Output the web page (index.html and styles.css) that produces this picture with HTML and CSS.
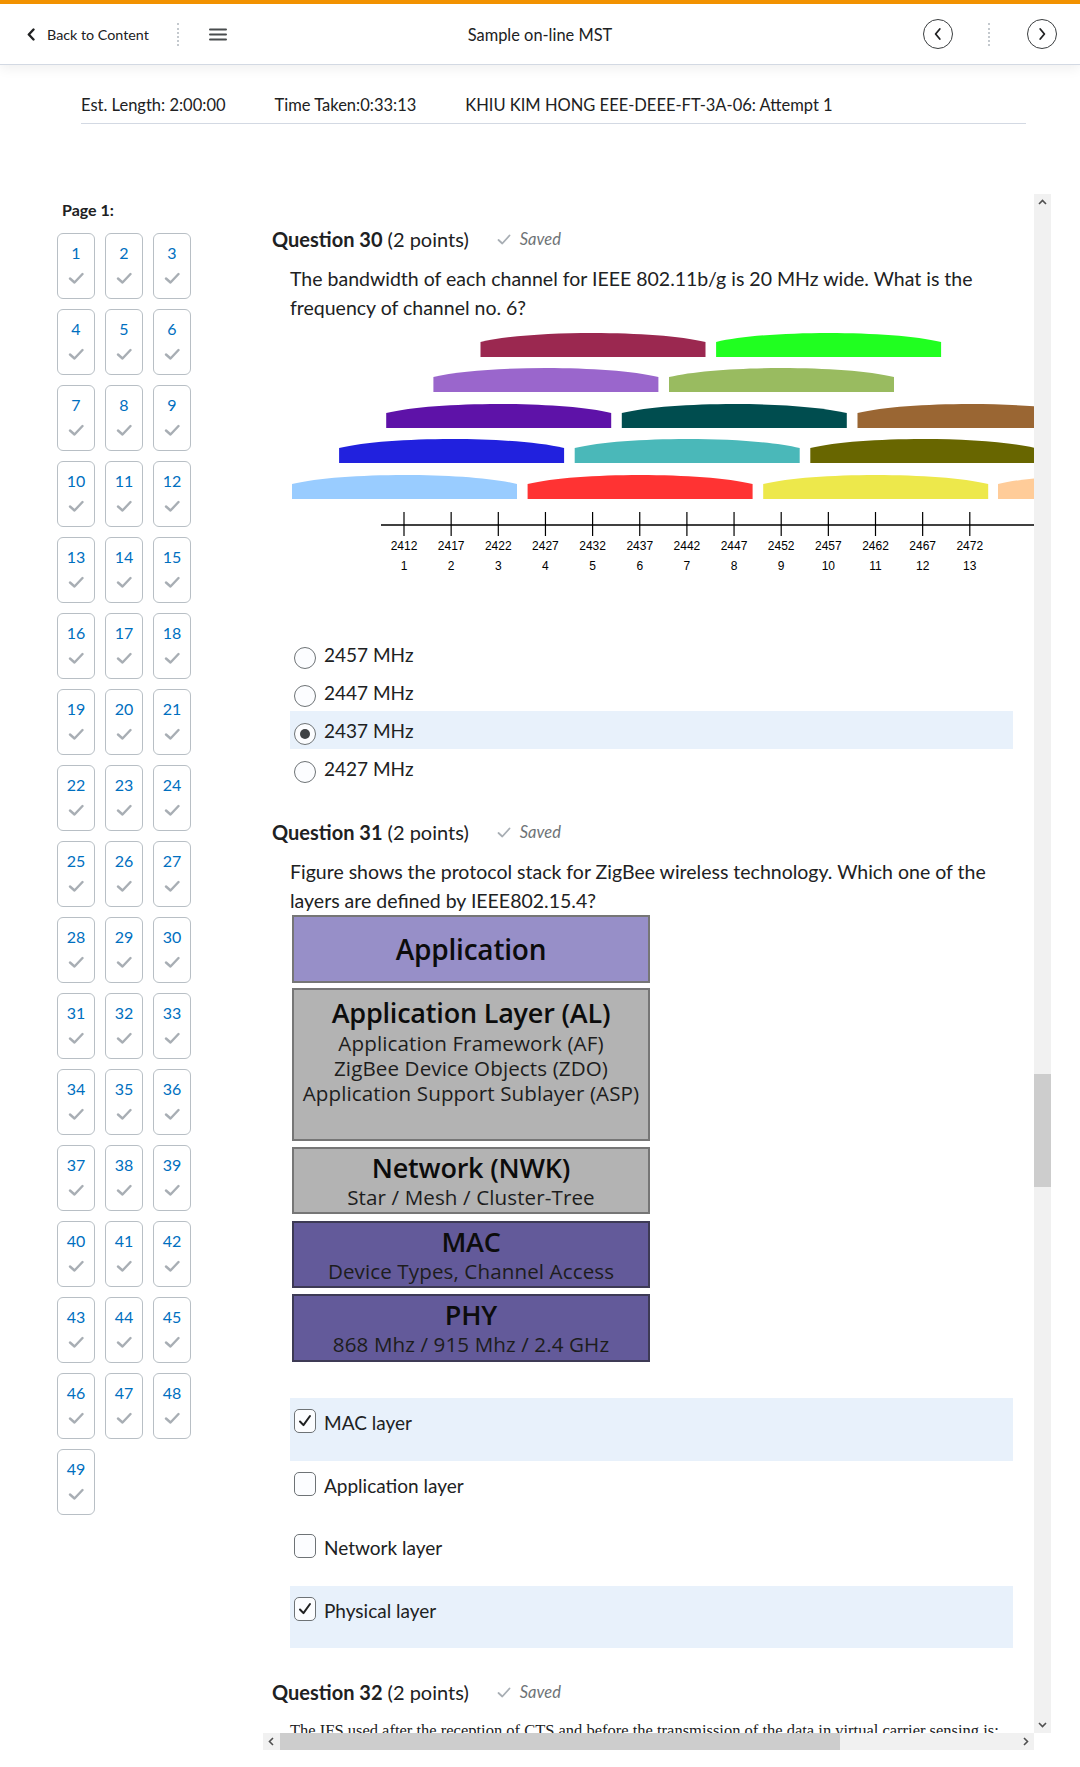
FILE: index.html
```html
<!DOCTYPE html>
<html lang="en">
<head>
<meta charset="utf-8">
<title>Sample on-line MST</title>
<link rel="stylesheet" href="styles.css">
</head>
<body>
<header class="topbar">
  <div class="nav-left">
    <a class="back">
      <svg class="back-chev" width="8" height="13" viewBox="0 0 8 13"><path d="M6.5 1.5L1.8 6.5l4.7 5" fill="none" stroke="#202122" stroke-width="2.4" stroke-linecap="round" stroke-linejoin="round"/></svg>
      <span>Back to Content</span>
    </a>
    <span class="vdots"></span>
    <svg class="burger" width="18" height="13" viewBox="0 0 18 13"><path d="M1 1.5h16M1 6.5h16M1 11.5h16" stroke="#494c4e" stroke-width="2" stroke-linecap="round"/></svg>
  </div>
  <div class="title">Sample on-line MST</div>
  <div class="nav-right">
    <span class="circ"><svg width="10" height="14" viewBox="0 0 10 14"><path d="M6.8 2L2.6 7l4.2 5" fill="none" stroke="#202122" stroke-width="1.8" stroke-linecap="round" stroke-linejoin="round"/></svg></span>
    <span class="vdots"></span>
    <span class="circ"><svg width="10" height="14" viewBox="0 0 10 14"><path d="M3.2 2l4.2 5-4.2 5" fill="none" stroke="#202122" stroke-width="1.8" stroke-linecap="round" stroke-linejoin="round"/></svg></span>
  </div>
</header>

<div class="info">
  <span>Est. Length: 2:00:00</span>
  <span>Time Taken:0:33:13</span>
  <span>KHIU KIM HONG EEE-DEEE-FT-3A-06: Attempt 1</span>
</div>

<div class="layout">
  <aside class="sidebar">
    <div class="page-label">Page 1:</div>
    <div class="qgrid">
      <a class="qbox"><span>1</span><svg class="ck" viewBox="0 0 16 12"><path d="M2 6.5l4.5 4L14.5 2"/></svg></a>
      <a class="qbox"><span>2</span><svg class="ck" viewBox="0 0 16 12"><path d="M2 6.5l4.5 4L14.5 2"/></svg></a>
      <a class="qbox"><span>3</span><svg class="ck" viewBox="0 0 16 12"><path d="M2 6.5l4.5 4L14.5 2"/></svg></a>
      <a class="qbox"><span>4</span><svg class="ck" viewBox="0 0 16 12"><path d="M2 6.5l4.5 4L14.5 2"/></svg></a>
      <a class="qbox"><span>5</span><svg class="ck" viewBox="0 0 16 12"><path d="M2 6.5l4.5 4L14.5 2"/></svg></a>
      <a class="qbox"><span>6</span><svg class="ck" viewBox="0 0 16 12"><path d="M2 6.5l4.5 4L14.5 2"/></svg></a>
      <a class="qbox"><span>7</span><svg class="ck" viewBox="0 0 16 12"><path d="M2 6.5l4.5 4L14.5 2"/></svg></a>
      <a class="qbox"><span>8</span><svg class="ck" viewBox="0 0 16 12"><path d="M2 6.5l4.5 4L14.5 2"/></svg></a>
      <a class="qbox"><span>9</span><svg class="ck" viewBox="0 0 16 12"><path d="M2 6.5l4.5 4L14.5 2"/></svg></a>
      <a class="qbox"><span>10</span><svg class="ck" viewBox="0 0 16 12"><path d="M2 6.5l4.5 4L14.5 2"/></svg></a>
      <a class="qbox"><span>11</span><svg class="ck" viewBox="0 0 16 12"><path d="M2 6.5l4.5 4L14.5 2"/></svg></a>
      <a class="qbox"><span>12</span><svg class="ck" viewBox="0 0 16 12"><path d="M2 6.5l4.5 4L14.5 2"/></svg></a>
      <a class="qbox"><span>13</span><svg class="ck" viewBox="0 0 16 12"><path d="M2 6.5l4.5 4L14.5 2"/></svg></a>
      <a class="qbox"><span>14</span><svg class="ck" viewBox="0 0 16 12"><path d="M2 6.5l4.5 4L14.5 2"/></svg></a>
      <a class="qbox"><span>15</span><svg class="ck" viewBox="0 0 16 12"><path d="M2 6.5l4.5 4L14.5 2"/></svg></a>
      <a class="qbox"><span>16</span><svg class="ck" viewBox="0 0 16 12"><path d="M2 6.5l4.5 4L14.5 2"/></svg></a>
      <a class="qbox"><span>17</span><svg class="ck" viewBox="0 0 16 12"><path d="M2 6.5l4.5 4L14.5 2"/></svg></a>
      <a class="qbox"><span>18</span><svg class="ck" viewBox="0 0 16 12"><path d="M2 6.5l4.5 4L14.5 2"/></svg></a>
      <a class="qbox"><span>19</span><svg class="ck" viewBox="0 0 16 12"><path d="M2 6.5l4.5 4L14.5 2"/></svg></a>
      <a class="qbox"><span>20</span><svg class="ck" viewBox="0 0 16 12"><path d="M2 6.5l4.5 4L14.5 2"/></svg></a>
      <a class="qbox"><span>21</span><svg class="ck" viewBox="0 0 16 12"><path d="M2 6.5l4.5 4L14.5 2"/></svg></a>
      <a class="qbox"><span>22</span><svg class="ck" viewBox="0 0 16 12"><path d="M2 6.5l4.5 4L14.5 2"/></svg></a>
      <a class="qbox"><span>23</span><svg class="ck" viewBox="0 0 16 12"><path d="M2 6.5l4.5 4L14.5 2"/></svg></a>
      <a class="qbox"><span>24</span><svg class="ck" viewBox="0 0 16 12"><path d="M2 6.5l4.5 4L14.5 2"/></svg></a>
      <a class="qbox"><span>25</span><svg class="ck" viewBox="0 0 16 12"><path d="M2 6.5l4.5 4L14.5 2"/></svg></a>
      <a class="qbox"><span>26</span><svg class="ck" viewBox="0 0 16 12"><path d="M2 6.5l4.5 4L14.5 2"/></svg></a>
      <a class="qbox"><span>27</span><svg class="ck" viewBox="0 0 16 12"><path d="M2 6.5l4.5 4L14.5 2"/></svg></a>
      <a class="qbox"><span>28</span><svg class="ck" viewBox="0 0 16 12"><path d="M2 6.5l4.5 4L14.5 2"/></svg></a>
      <a class="qbox"><span>29</span><svg class="ck" viewBox="0 0 16 12"><path d="M2 6.5l4.5 4L14.5 2"/></svg></a>
      <a class="qbox"><span>30</span><svg class="ck" viewBox="0 0 16 12"><path d="M2 6.5l4.5 4L14.5 2"/></svg></a>
      <a class="qbox"><span>31</span><svg class="ck" viewBox="0 0 16 12"><path d="M2 6.5l4.5 4L14.5 2"/></svg></a>
      <a class="qbox"><span>32</span><svg class="ck" viewBox="0 0 16 12"><path d="M2 6.5l4.5 4L14.5 2"/></svg></a>
      <a class="qbox"><span>33</span><svg class="ck" viewBox="0 0 16 12"><path d="M2 6.5l4.5 4L14.5 2"/></svg></a>
      <a class="qbox"><span>34</span><svg class="ck" viewBox="0 0 16 12"><path d="M2 6.5l4.5 4L14.5 2"/></svg></a>
      <a class="qbox"><span>35</span><svg class="ck" viewBox="0 0 16 12"><path d="M2 6.5l4.5 4L14.5 2"/></svg></a>
      <a class="qbox"><span>36</span><svg class="ck" viewBox="0 0 16 12"><path d="M2 6.5l4.5 4L14.5 2"/></svg></a>
      <a class="qbox"><span>37</span><svg class="ck" viewBox="0 0 16 12"><path d="M2 6.5l4.5 4L14.5 2"/></svg></a>
      <a class="qbox"><span>38</span><svg class="ck" viewBox="0 0 16 12"><path d="M2 6.5l4.5 4L14.5 2"/></svg></a>
      <a class="qbox"><span>39</span><svg class="ck" viewBox="0 0 16 12"><path d="M2 6.5l4.5 4L14.5 2"/></svg></a>
      <a class="qbox"><span>40</span><svg class="ck" viewBox="0 0 16 12"><path d="M2 6.5l4.5 4L14.5 2"/></svg></a>
      <a class="qbox"><span>41</span><svg class="ck" viewBox="0 0 16 12"><path d="M2 6.5l4.5 4L14.5 2"/></svg></a>
      <a class="qbox"><span>42</span><svg class="ck" viewBox="0 0 16 12"><path d="M2 6.5l4.5 4L14.5 2"/></svg></a>
      <a class="qbox"><span>43</span><svg class="ck" viewBox="0 0 16 12"><path d="M2 6.5l4.5 4L14.5 2"/></svg></a>
      <a class="qbox"><span>44</span><svg class="ck" viewBox="0 0 16 12"><path d="M2 6.5l4.5 4L14.5 2"/></svg></a>
      <a class="qbox"><span>45</span><svg class="ck" viewBox="0 0 16 12"><path d="M2 6.5l4.5 4L14.5 2"/></svg></a>
      <a class="qbox"><span>46</span><svg class="ck" viewBox="0 0 16 12"><path d="M2 6.5l4.5 4L14.5 2"/></svg></a>
      <a class="qbox"><span>47</span><svg class="ck" viewBox="0 0 16 12"><path d="M2 6.5l4.5 4L14.5 2"/></svg></a>
      <a class="qbox"><span>48</span><svg class="ck" viewBox="0 0 16 12"><path d="M2 6.5l4.5 4L14.5 2"/></svg></a>
      <a class="qbox"><span>49</span><svg class="ck" viewBox="0 0 16 12"><path d="M2 6.5l4.5 4L14.5 2"/></svg></a>
    </div>
  </aside>

  <div class="frame">
    <div class="viewport">
      <div class="content">
        <section class="q q30">
          <h2 class="q-head"><strong>Question 30</strong> (2 points)<span class="saved"><svg class="sv-ck" viewBox="0 0 14 11"><path d="M1.5 6l3.8 3.5L12.5 1.5"/></svg>Saved</span></h2>
          <div class="q-body">
            <p class="q-text">The bandwidth of each channel for IEEE 802.11b/g is 20 MHz wide. What is the frequency of channel no. 6?</p>
            <svg class="chart" width="800" height="263" viewBox="0 0 800 263">
              <defs><path id="bar" d="M0 24V9C50-3 175-3 225 9V24Z"/></defs>
              <use href="#bar" x="190.5" y="11" fill="#9b2850"/>
              <use href="#bar" x="426.1" y="11" fill="#20ff20"/>
              <use href="#bar" x="143.4" y="46" fill="#9a66cc"/>
              <use href="#bar" x="379" y="46" fill="#99bb60"/>
              <use href="#bar" x="96.2" y="82" fill="#5e12a8"/>
              <use href="#bar" x="331.8" y="82" fill="#004d4f"/>
              <use href="#bar" x="567.5" y="82" fill="#9a6633"/>
              <use href="#bar" x="49.1" y="117" fill="#2121de"/>
              <use href="#bar" x="284.7" y="117" fill="#4ab8b9"/>
              <use href="#bar" x="520.3" y="117" fill="#686600"/>
              <use href="#bar" x="2" y="153" fill="#99ccff"/>
              <use href="#bar" x="237.6" y="153" fill="#ff3333"/>
              <use href="#bar" x="473.2" y="153" fill="#ede84b"/>
              <use href="#bar" x="708" y="153" fill="#ffcc99"/>
              <line x1="91" y1="203" x2="800" y2="203" stroke="#000" stroke-width="1.6"/>
              <g stroke="#000" stroke-width="1.2">
                <line x1="114" y1="190" x2="114" y2="214"/>
                <line x1="161.15" y1="190" x2="161.15" y2="214"/>
                <line x1="208.3" y1="190" x2="208.3" y2="214"/>
                <line x1="255.45" y1="190" x2="255.45" y2="214"/>
                <line x1="302.6" y1="190" x2="302.6" y2="214"/>
                <line x1="349.75" y1="190" x2="349.75" y2="214"/>
                <line x1="396.9" y1="190" x2="396.9" y2="214"/>
                <line x1="444.05" y1="190" x2="444.05" y2="214"/>
                <line x1="491.2" y1="190" x2="491.2" y2="214"/>
                <line x1="538.35" y1="190" x2="538.35" y2="214"/>
                <line x1="585.5" y1="190" x2="585.5" y2="214"/>
                <line x1="632.65" y1="190" x2="632.65" y2="214"/>
                <line x1="679.8" y1="190" x2="679.8" y2="214"/>
              </g>
              <g class="ax-lbl" text-anchor="middle">
                <text x="114" y="228">2412</text><text x="114" y="248">1</text>
                <text x="161.15" y="228">2417</text><text x="161.15" y="248">2</text>
                <text x="208.3" y="228">2422</text><text x="208.3" y="248">3</text>
                <text x="255.45" y="228">2427</text><text x="255.45" y="248">4</text>
                <text x="302.6" y="228">2432</text><text x="302.6" y="248">5</text>
                <text x="349.75" y="228">2437</text><text x="349.75" y="248">6</text>
                <text x="396.9" y="228">2442</text><text x="396.9" y="248">7</text>
                <text x="444.05" y="228">2447</text><text x="444.05" y="248">8</text>
                <text x="491.2" y="228">2452</text><text x="491.2" y="248">9</text>
                <text x="538.35" y="228">2457</text><text x="538.35" y="248">10</text>
                <text x="585.5" y="228">2462</text><text x="585.5" y="248">11</text>
                <text x="632.65" y="228">2467</text><text x="632.65" y="248">12</text>
                <text x="679.8" y="228">2472</text><text x="679.8" y="248">13</text>
              </g>
            </svg>
            <div class="opts radios">
              <label class="opt"><span class="radio"></span><span>2457 MHz</span></label>
              <label class="opt"><span class="radio"></span><span>2447 MHz</span></label>
              <label class="opt sel"><span class="radio on"></span><span>2437 MHz</span></label>
              <label class="opt"><span class="radio"></span><span>2427 MHz</span></label>
            </div>
          </div>
        </section>

        <section class="q q31">
          <h2 class="q-head"><strong>Question 31</strong> (2 points)<span class="saved"><svg class="sv-ck" viewBox="0 0 14 11"><path d="M1.5 6l3.8 3.5L12.5 1.5"/></svg>Saved</span></h2>
          <div class="q-body">
            <p class="q-text">Figure shows the protocol stack for ZigBee wireless technology. Which one of the layers are defined by IEEE802.15.4?</p>
            <div class="zb">
              <div class="zb-box zb-app"><div class="zb-t">Application</div></div>
              <div class="zb-box zb-al"><div class="zb-t">Application Layer (AL)</div><div class="zb-s">Application Framework (AF)</div><div class="zb-s">ZigBee Device Objects (ZDO)</div><div class="zb-s">Application Support Sublayer (ASP)</div></div>
              <div class="zb-box zb-nwk"><div class="zb-t">Network (NWK)</div><div class="zb-s">Star / Mesh / Cluster-Tree</div></div>
              <div class="zb-box zb-mac"><div class="zb-t">MAC</div><div class="zb-s">Device Types, Channel Access</div></div>
              <div class="zb-box zb-phy"><div class="zb-t">PHY</div><div class="zb-s">868 Mhz / 915 Mhz / 2.4 GHz</div></div>
            </div>
            <div class="opts checks">
              <label class="copt sel"><span class="cbox"><svg viewBox="0 0 22 24"><path d="M5.5 12.5l3.8 4L16.5 6.5"/></svg></span><span class="ctext">MAC layer</span></label>
              <label class="copt"><span class="cbox"></span><span class="ctext">Application layer</span></label>
              <label class="copt"><span class="cbox"></span><span class="ctext">Network layer</span></label>
              <label class="copt sel"><span class="cbox"><svg viewBox="0 0 22 24"><path d="M5.5 12.5l3.8 4L16.5 6.5"/></svg></span><span class="ctext">Physical layer</span></label>
            </div>
          </div>
        </section>

        <section class="q q32">
          <h2 class="q-head"><strong>Question 32</strong> (2 points)<span class="saved"><svg class="sv-ck" viewBox="0 0 14 11"><path d="M1.5 6l3.8 3.5L12.5 1.5"/></svg>Saved</span></h2>
          <div class="q-body">
            <p class="q-serif">The IFS used after the reception of CTS and before the transmission of the data in virtual carrier sensing is:</p>
          </div>
        </section>
      </div>
    </div>

    <div class="vscroll">
      <span class="sb-btn"><svg width="17" height="17" viewBox="0 0 17 17"><path d="M5 10l3.5-3.5L12 10" fill="none" stroke="#505050" stroke-width="1.6"/></svg></span>
      <span class="vthumb"></span>
      <span class="sb-btn sb-end"><svg width="17" height="17" viewBox="0 0 17 17"><path d="M5 7l3.5 3.5L12 7" fill="none" stroke="#505050" stroke-width="1.6"/></svg></span>
    </div>
    <div class="hscroll">
      <span class="sb-btn"><svg width="17" height="17" viewBox="0 0 17 17"><path d="M10 5L6.5 8.5 10 12" fill="none" stroke="#505050" stroke-width="1.6"/></svg></span>
      <span class="hthumb"></span>
      <span class="sb-btn sb-end"><svg width="17" height="17" viewBox="0 0 17 17"><path d="M7 5l3.5 3.5L7 12" fill="none" stroke="#505050" stroke-width="1.6"/></svg></span>
    </div>
    <div class="corner"></div>
  </div>
</div>
</body>
</html>
```

FILE: styles.css
```css
* { box-sizing: border-box; margin: 0; padding: 0; }

html, body {
  width: 1080px;
  height: 1767px;
  overflow: hidden;
}

body {
  margin: 0;
  font-family: Lato, "Noto Sans", sans-serif;
  color: #202122;
  background: #fff;
}

/* ---------- top bar ---------- */
.topbar {
  height: 65px;
  border-top: 4px solid #f29200;
  border-bottom: 1px solid #d3d9e3;
  box-shadow: 0 3px 12px rgba(0, 0, 0, 0.07);
  background: #fff;
  display: grid;
  grid-template-columns: 1fr auto 1fr;
  align-items: center;
  position: relative;
  z-index: 2;
}

.nav-left {
  display: flex;
  align-items: center;
  padding-left: 27px;
}

.back {
  display: flex;
  align-items: center;
  gap: 12px;
  font-size: 14.3px;
  color: #202122;
}

.vdots {
  display: block;
  width: 0;
  height: 23px;
  border-left: 2px dotted #c4c9ce;
}

.nav-left .vdots { margin-left: 28px; }
.burger { margin-left: 30px; display: block; }

.title {
  font-size: 16.4px;
  text-align: center;
}

.nav-right {
  display: flex;
  align-items: center;
  justify-content: flex-end;
  padding-right: 23px;
}

.nav-right .vdots { margin: 0 37px 0 35px; }

.circ {
  width: 30px;
  height: 30px;
  border-radius: 50%;
  border: 1.5px solid #3b3e40;
  display: flex;
  align-items: center;
  justify-content: center;
}

/* ---------- info row ---------- */
.info {
  margin: 0 54px 0 81px;
  padding: 28px 0 6px;
  border-bottom: 1px solid #d3d9e3;
  display: flex;
  gap: 49px;
  font-size: 16.5px;
  line-height: 24px;
}

/* ---------- layout ---------- */
.layout {
  margin-top: 70px;
  display: grid;
  grid-template-columns: 263px 788px;
}

.sidebar {
  padding: 6px 0 0 57px;
}

.page-label {
  font-weight: 700;
  font-size: 16px;
  line-height: 20px;
  padding-left: 5px;
  margin-bottom: 13px;
}

.qgrid {
  display: grid;
  grid-template-columns: repeat(3, 38px);
  grid-auto-rows: 66px;
  column-gap: 10px;
  row-gap: 10px;
}

.qbox {
  border: 1px solid #b8bfc5;
  border-radius: 6px;
  display: flex;
  flex-direction: column;
  align-items: center;
  padding-top: 8px;
  color: #006fbf;
  font-size: 16px;
  line-height: 22px;
}

.ck {
  width: 16px;
  height: 12px;
  margin-top: 8px;
  fill: none;
  stroke: #a8aeb4;
  stroke-width: 2.4;
  stroke-linecap: round;
  stroke-linejoin: round;
}

/* ---------- frame with scrollbars ---------- */
.frame {
  height: 1556px;
  display: grid;
  grid-template-columns: 771px 17px;
  grid-template-rows: 1539px 17px;
}

.viewport {
  overflow: hidden;
}

.content {
  padding: 31px 21px 0 9px;
}

.q-head {
  font-size: 20px;
  line-height: 28px;
  font-weight: 400;
  display: flex;
  align-items: center;
  white-space: pre;
}

.q-head strong { font-weight: 700; }

.saved {
  display: flex;
  align-items: center;
  margin-left: 28px;
  font-size: 16.5px;
  font-style: italic;
  color: #6e7376;
}

.sv-ck {
  width: 14px;
  height: 11px;
  margin-right: 9px;
  fill: none;
  stroke: #a8aeb4;
  stroke-width: 1.8;
  stroke-linecap: round;
  stroke-linejoin: round;
}

.q-body {
  margin-left: 18px;
}

.q-text {
  margin-top: 11px;
  font-size: 19.5px;
  line-height: 29px;
}

.chart {
  display: block;
}

.ax-lbl {
  font-family: "Liberation Sans", Arial, sans-serif;
  font-size: 12px;
  fill: #000;
}

.radios { margin-top: 50px; }

.opt {
  height: 38px;
  display: flex;
  align-items: flex-start;
  gap: 8px;
  padding: 8px 0 0 4px;
  font-size: 19px;
  line-height: 24px;
}

.opt.sel, .copt.sel { background: #e8f1fb; }

.radio {
  width: 22px;
  height: 22px;
  margin-top: 4px;
  border-radius: 50%;
  border: 1px solid #6e7376;
  background: #fcfdff;
  display: flex;
  align-items: center;
  justify-content: center;
}

.radio.on::after {
  content: "";
  width: 10px;
  height: 10px;
  border-radius: 50%;
  background: #3f4245;
}

.q31 { margin-top: 31px; }

.zb {
  margin: 0 0 0 2px;
  width: 358px;
  display: flex;
  flex-direction: column;
  font-family: "Open Sans", "Noto Sans", sans-serif;
  color: #0c0c0c;
  text-align: center;
}

.zb-box {
  border: 2px solid #767676;
  padding-top: 2px;
}

.zb-app {
  height: 68px;
  background: #978fc8;
  display: flex;
  align-items: center;
  justify-content: center;
  padding-top: 0;
}

.zb-al {
  height: 153px;
  margin-top: 5px;
  background: #b3b3b3;
  padding-top: 5px;
}

.zb-nwk {
  height: 67px;
  margin-top: 6px;
  background: #b3b3b3;
}

.zb-mac {
  height: 67px;
  margin-top: 7px;
  background: #635a9a;
  border-color: #3d3a55;
}

.zb-phy {
  height: 68px;
  margin-top: 6px;
  background: #635a9a;
  border-color: #3d3a55;
}

.zb-t {
  font-size: 27px;
  line-height: 34px;
  font-weight: 600;
  letter-spacing: -0.2px;
}

.zb-app .zb-t { font-size: 28px; }
.zb-al .zb-t { line-height: 36px; }

.zb-s {
  font-size: 20.6px;
  line-height: 25px;
  color: #1d1d1d;
  letter-spacing: 0.1px;
}

.checks { margin-top: 36px; }

.copt {
  height: 62.5px;
  display: flex;
  align-items: flex-start;
  gap: 8px;
  padding: 11px 0 0 4px;
  font-size: 19px;
  line-height: 24px;
}

.ctext { margin-top: 2px; }

.cbox {
  width: 22px;
  height: 24px;
  border: 1px solid #6e7376;
  border-radius: 5px;
  background: #fcfdff;
  display: block;
}

.cbox svg {
  display: block;
  width: 20px;
  height: 22px;
  fill: none;
  stroke: #202122;
  stroke-width: 2.2;
  stroke-linecap: round;
  stroke-linejoin: round;
}

.q32 { margin-top: 30px; }

.q-serif {
  margin-top: 15px;
  font-family: "Liberation Serif", "Times New Roman", serif;
  font-size: 16.5px;
  line-height: 20px;
  white-space: nowrap;
}

/* scrollbars */
.vscroll {
  background: #f1f1f1;
  display: flex;
  flex-direction: column;
}

.hscroll {
  background: #f1f1f1;
  display: flex;
}

.sb-btn {
  width: 17px;
  height: 17px;
  flex: 0 0 17px;
  display: block;
}

.sb-btn svg { display: block; }

.sb-end { margin-top: auto; }
.hscroll .sb-end { margin-top: 0; margin-left: auto; }

.vthumb {
  display: block;
  height: 113px;
  margin-top: 863px;
  background: #cdcdcd;
}

.hthumb {
  display: block;
  width: 560px;
  background: #cdcdcd;
}

.corner { background: #fff; }
```
